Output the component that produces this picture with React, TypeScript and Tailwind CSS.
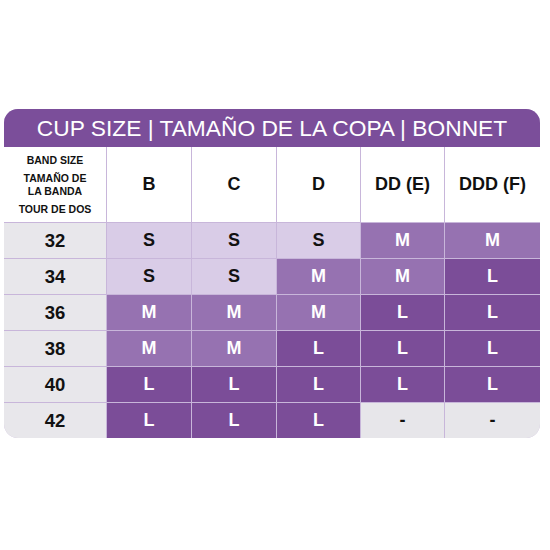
import { Fragment } from "react";

const cols = ["B", "C", "D", "DD (E)", "DDD (F)"];

type Cell = "S" | "M" | "L" | "-";

const rows: { band: string; cells: Cell[] }[] = [
  { band: "32", cells: ["S", "S", "S", "M", "M"] },
  { band: "34", cells: ["S", "S", "M", "M", "L"] },
  { band: "36", cells: ["M", "M", "M", "L", "L"] },
  { band: "38", cells: ["M", "M", "L", "L", "L"] },
  { band: "40", cells: ["L", "L", "L", "L", "L"] },
  { band: "42", cells: ["L", "L", "L", "-", "-"] },
];

const cellStyle: Record<Cell, string> = {
  S: "bg-[#d9cce7] text-[#111]",
  M: "bg-[#9672b1] text-white",
  L: "bg-[#7b4d98] text-white",
  "-": "bg-[#e7e6ea] text-[#111]",
};

export default function App() {
  return (
    <div className="w-[550px] h-[550px] bg-white pt-[109px] pl-[4px] font-['Liberation_Sans',Arial,sans-serif]">
      <div className="w-[536px] rounded-[14px] overflow-hidden bg-[#c8b6da]">
        <div className="h-[38px] bg-[#7b4e9a] flex items-center justify-center text-white text-[22.75px] leading-none">
          CUP SIZE | TAMAÑO DE LA COPA | BONNET
        </div>
        <div className="grid grid-cols-[102px_84px_84px_83px_83px_95px] grid-rows-[75px_35px_35px_35px_35px_35px_35px] gap-px">
          <div className="bg-white flex flex-col items-center justify-center text-[10.5px] font-bold text-[#111] leading-[13px] text-center">
            <span>BAND SIZE</span>
            <span className="mt-[5px]">TAMAÑO DE</span>
            <span>LA BANDA</span>
            <span className="mt-[5px]">TOUR DE DOS</span>
          </div>
          {cols.map((c) => (
            <div
              key={c}
              className="bg-white flex items-center justify-center text-[18px] font-bold text-[#111]"
            >
              {c}
            </div>
          ))}
          {rows.map((r) => (
            <Fragment key={r.band}>
              <div className="bg-[#e8e7eb] flex items-center justify-center text-[18.5px] font-bold text-[#111]">
                {r.band}
              </div>
              {r.cells.map((c, j) => (
                <div
                  key={j}
                  className={`${cellStyle[c]} flex items-center justify-center text-[18px] font-bold`}
                >
                  {c}
                </div>
              ))}
            </Fragment>
          ))}
        </div>
      </div>
    </div>
  );
}
